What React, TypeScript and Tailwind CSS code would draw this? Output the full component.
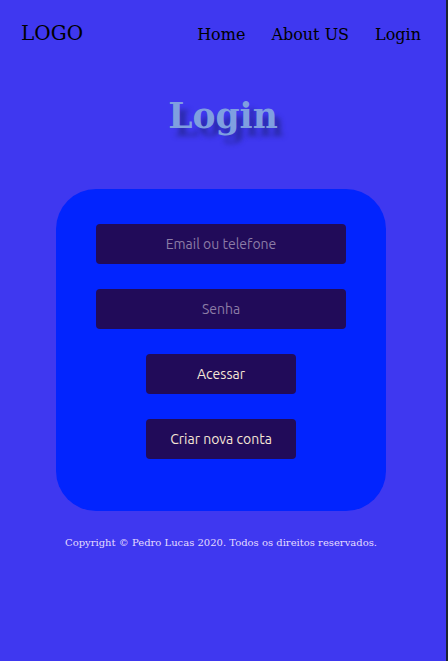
export default function App() {
  return (
    <div className="flex min-h-[661px] w-full bg-[#3f38f0]">
      <div className="flex-1 flex flex-col" style={{ fontFamily: '"DejaVu Serif", serif' }}>
        <header className="flex items-baseline justify-between pl-[21px] pr-[25px] pt-[19px]">
          <div className="text-[20px] leading-[28px] text-black">LOGO</div>
          <nav className="flex items-baseline gap-[26px] text-[16px] text-black">
            <a href="#">Home</a>
            <a href="#">About US</a>
            <a href="#">Login</a>
          </nav>
        </header>

        <h1 className="mt-[47px] text-center text-[34.5px] leading-[44px] font-bold text-[#7f9fe0] [text-shadow:6px_8px_5px_#2a2aa8]">
          Login
        </h1>

        <div className="ml-[56px] mt-[51px] flex w-[330px] flex-col items-center gap-[25px] rounded-[40px] bg-[#0224fe] pt-[35px] pb-[52px]">
          <input
            placeholder="Email ou telefone"
            className="h-[40px] w-[250px] rounded-[4px] bg-[#210b59] text-center text-[14px] text-[#e0d0e8] outline-none placeholder:text-[#8c7ca6]"
            style={{ fontFamily: 'Ubuntu, "Noto Sans", sans-serif' }}
          />
          <input
            type="password"
            placeholder="Senha"
            className="h-[40px] w-[250px] rounded-[4px] bg-[#210b59] text-center text-[14px] text-[#e0d0e8] outline-none placeholder:text-[#8c7ca6]"
            style={{ fontFamily: 'Ubuntu, "Noto Sans", sans-serif' }}
          />
          <button
            className="h-[40px] w-[150px] rounded-[4px] bg-[#210b59] text-[14px] text-[#f6e6d6]"
            style={{ fontFamily: 'Ubuntu, "Noto Sans", sans-serif' }}
          >
            Acessar
          </button>
          <button
            className="h-[40px] w-[150px] rounded-[4px] bg-[#210b59] text-[14px] text-[#f6e6d6]"
            style={{ fontFamily: 'Ubuntu, "Noto Sans", sans-serif' }}
          >
            Criar nova conta
          </button>
        </div>

        <footer className="mt-[24px] ml-[56px] w-[330px] whitespace-nowrap text-center text-[10px] leading-[16px] text-[#e4dcff]">
          Copyright © Pedro Lucas 2020. Todos os direitos reservados.
        </footer>
      </div>
      <div className="w-[2px] bg-[#1c2332]" />
    </div>
  );
}
